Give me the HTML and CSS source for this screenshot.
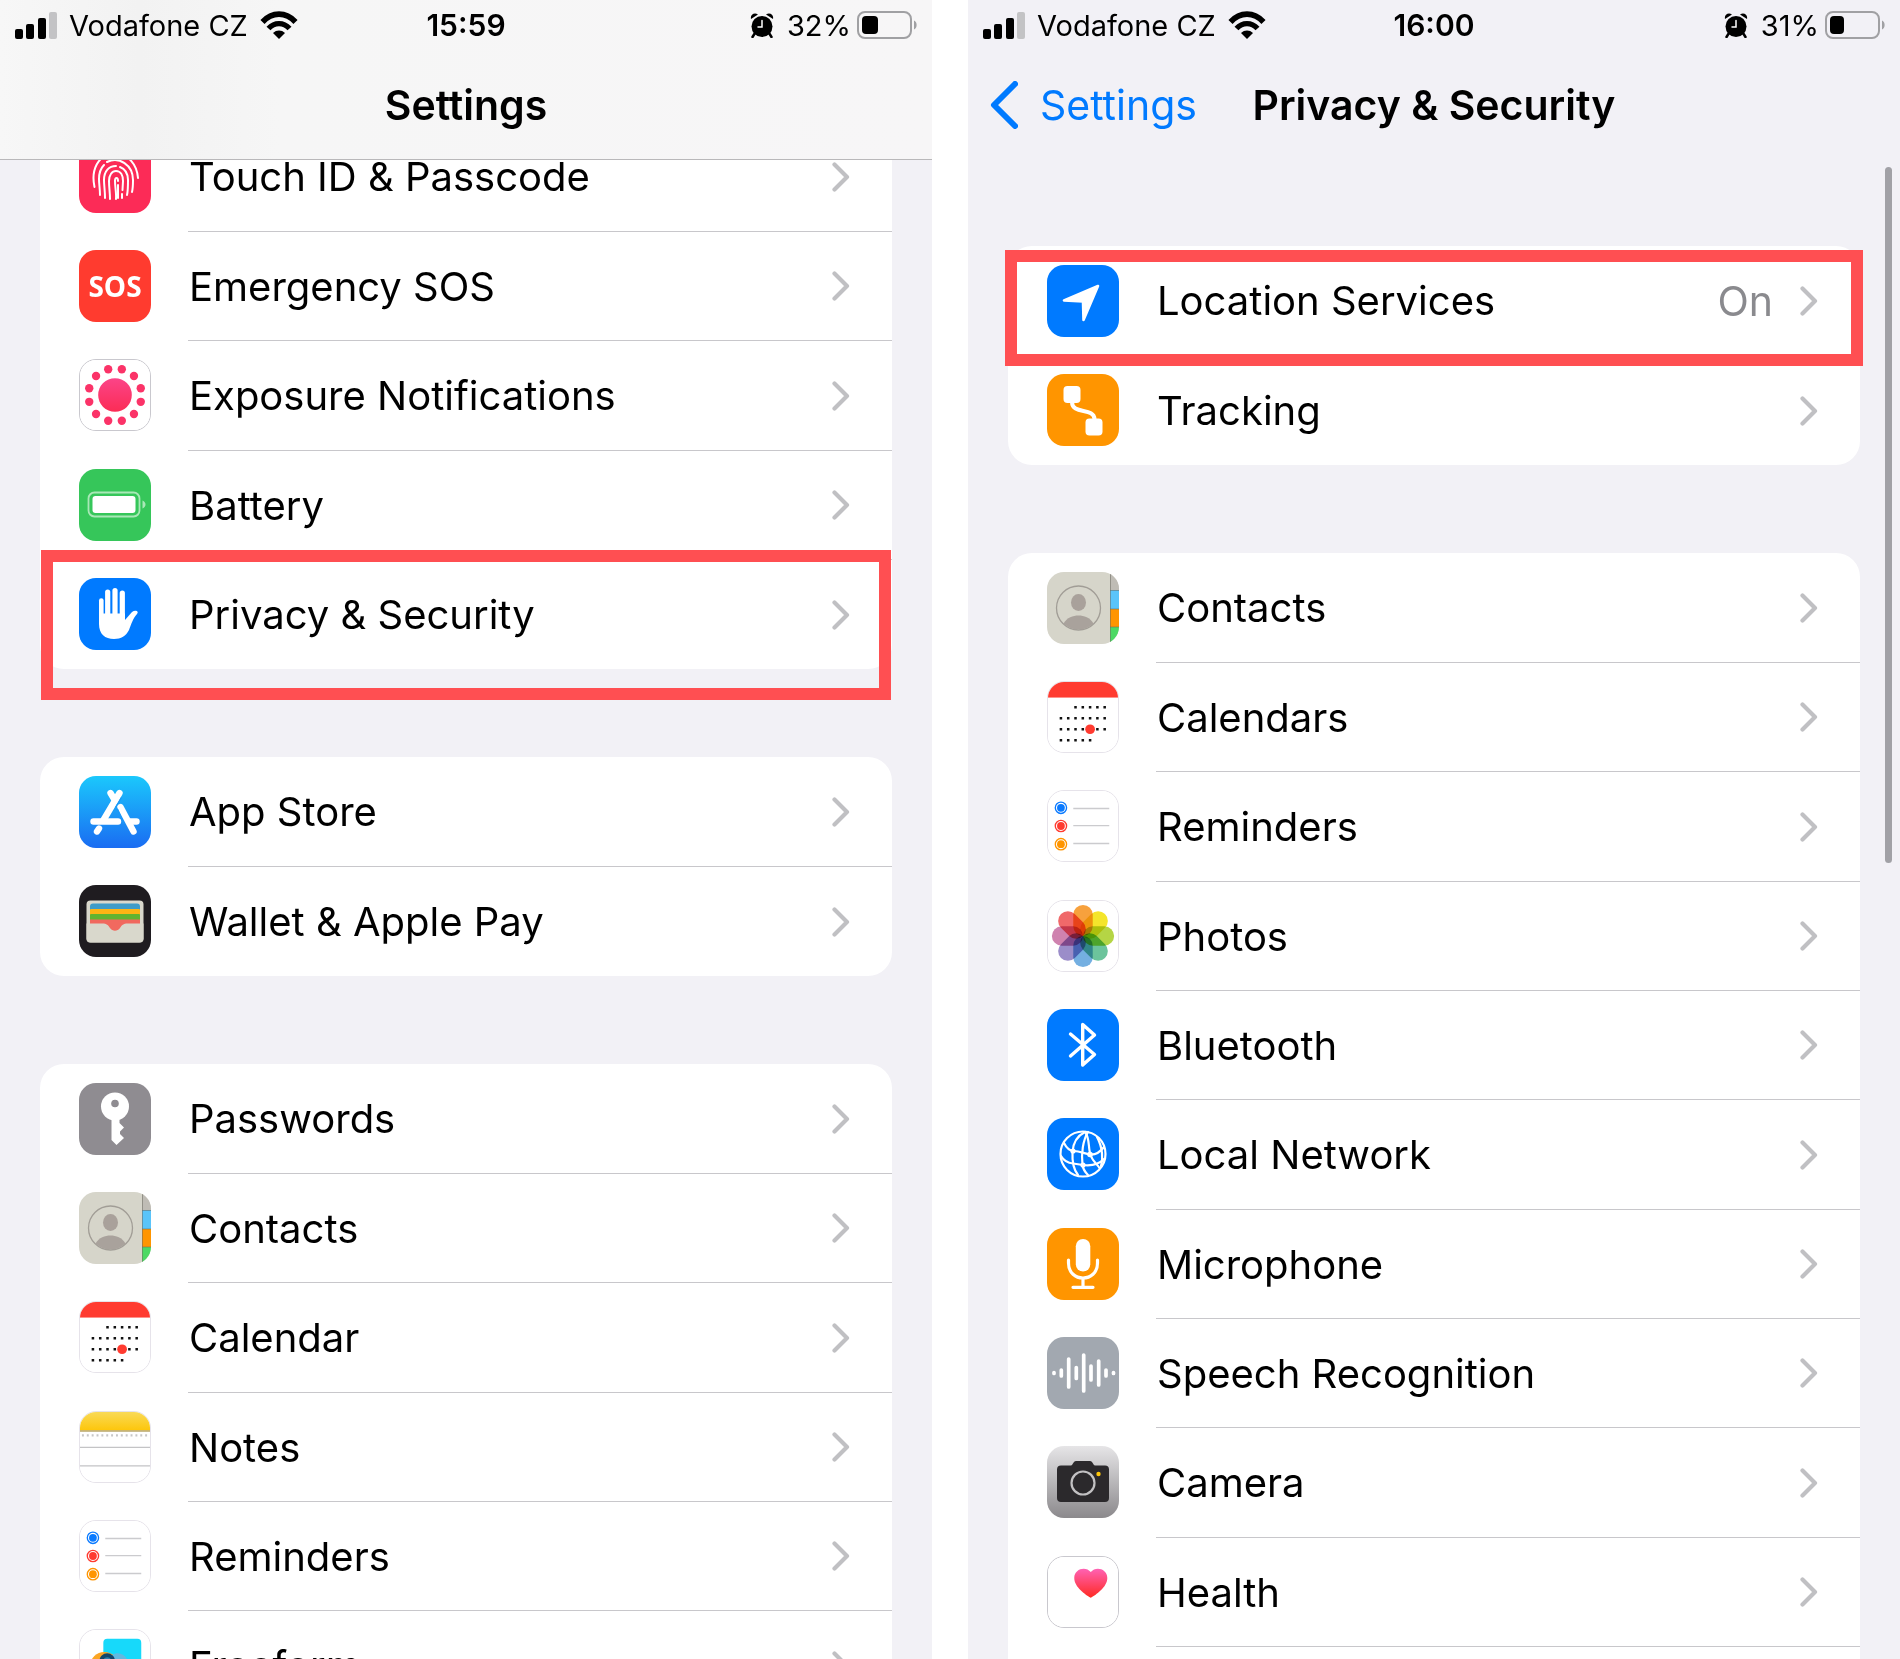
FILE: index.html
```html
<!DOCTYPE html>
<html lang="en">
  <head>
    <meta charset="utf-8">
    <title>Settings</title>
    <link rel="stylesheet" href="styles.css">
  </head>
  <body>
    <!-- shared icons -->
    <svg class="sprite" aria-hidden="true">
      <defs>
        <linearGradient id="pink" x1="0" y1="0" x2="0" y2="1">
          <stop offset="0" stop-color="#fb4488"/>
          <stop offset="1" stop-color="#fb2c55"/>
        </linearGradient>
        <linearGradient id="sky" x1="0" y1="0" x2="0" y2="1">
          <stop offset="0" stop-color="#1bc8fc"/>
          <stop offset="1" stop-color="#1a6cf2"/>
        </linearGradient>
        <linearGradient id="gold" x1="0" y1="0" x2="0" y2="1">
          <stop offset="0" stop-color="#f9da57"/>
          <stop offset="1" stop-color="#fdc60a"/>
        </linearGradient>
        <linearGradient id="metal" x1="0" y1="0" x2="0" y2="1">
          <stop offset="0" stop-color="#e6e5e7"/>
          <stop offset="1" stop-color="#8b898c"/>
        </linearGradient>
        <linearGradient id="heart" x1="0" y1="0" x2="0" y2="1">
          <stop offset="0" stop-color="#ff62b4"/>
          <stop offset="1" stop-color="#ff2a22"/>
        </linearGradient>
      </defs>

      <symbol id="chevron" viewBox="0 0 18 30">
        <path d="M2.5 2.5 L15 15 L2.5 27.5" fill="none" stroke="#c0c0c3" stroke-width="4.200" stroke-linecap="round" stroke-linejoin="round"/>
      </symbol>

      <symbol id="signal" viewBox="0 0 42 27">
        <rect x="0" y="17" width="8" height="10" rx="2"/>
        <rect x="11" y="12" width="8" height="15" rx="2"/>
        <rect x="23" y="6" width="8" height="21" rx="2"/>
        <rect x="34" y="0" width="8" height="27" rx="2" fill="#c3c3c5"/>
      </symbol>

      <symbol id="wifi" viewBox="0 0 38 28">
        <path d="M2.500 11 C12 0.500 26 0.500 35.500 11" fill="none" stroke="#000" stroke-width="5.600"/>
        <path d="M8.500 17.500 C14.500 11 23.500 11 29.500 17.500" fill="none" stroke="#000" stroke-width="5.400"/>
        <path d="M13 22 C16.500 18.700 21.500 18.700 25 22 L19 28 Z"/>
      </symbol>

      <symbol id="alarm" viewBox="0 0 24 25">
        <circle cx="12" cy="13.500" r="10.500"/>
        <path d="M1 6 C0 2 4 -1 8 1.500 Z M23 6 C24 2 20 -1 16 1.500 Z"/>
        <path d="M5 20 L2.500 24 M19 20 L21.500 24" stroke="#000" stroke-width="2.500" stroke-linecap="round"/>
        <path d="M12 7.500 V14 H8" fill="none" stroke="#fff" stroke-width="1.500" stroke-linecap="round"/>
      </symbol>

      <symbol id="contacts" viewBox="0 0 72 72">
        <rect width="72" height="72" fill="#d6d5ca"/>
        <rect x="63" y="0" width="9" height="18" fill="#bfbcb5"/>
        <rect x="63" y="18" width="9" height="19" fill="#5ac4fa"/>
        <rect x="63" y="37" width="9" height="18" fill="#ff9500"/>
        <rect x="63" y="55" width="9" height="17" fill="#4cd964"/>
        <path d="M63 18.500 H72 M63 37 H72 M63 55 H72 M63.500 0 V72" stroke="#6d6b60" stroke-opacity=".55"/>
        <circle cx="31.500" cy="36" r="22" fill="none" stroke="#a19d96" stroke-width="1.300"/>
        <ellipse cx="31.500" cy="30.500" rx="7.500" ry="8.500" fill="#a9a19b"/>
        <path d="M16.500 51.500 C20 45.500 26 43.500 31.500 43.500 S43 45.500 46.500 51.500 A21.500 21.500 0 0 1 16.500 51.500Z" fill="#a9a29c"/>
      </symbol>

      <symbol id="calendar" viewBox="0 0 72 72">
        <rect width="72" height="72" fill="#fff"/>
        <rect width="72" height="16" fill="#ff3b30"/>
        <g stroke="#111" stroke-width="2.600" stroke-dasharray="2.600 4.900">
          <path d="M27 26 H60"/>
          <path d="M12 37.300 H60"/>
          <path d="M12 48.600 H60"/>
          <path d="M12 60 H45"/>
        </g>
        <circle cx="43.300" cy="48.600" r="5" fill="#ff3b30"/>
      </symbol>

      <symbol id="reminders" viewBox="0 0 72 72">
        <rect width="72" height="72" fill="#fff"/>
        <g fill="none" stroke-width="1.400">
          <circle cx="13.300" cy="17.300" r="5.800" stroke="#0a7aff"/>
          <circle cx="13.300" cy="36" r="5.800" stroke="#ff3b30"/>
          <circle cx="13.300" cy="54.700" r="5.800" stroke="#ff9500"/>
        </g>
        <circle cx="13.300" cy="17.300" r="4" fill="#0a7aff"/>
        <circle cx="13.300" cy="36" r="4" fill="#ff3b30"/>
        <circle cx="13.300" cy="54.700" r="4" fill="#ff9500"/>
        <path d="M26 18 H63 M26 35.500 H63 M26 54 H63" stroke="#cbcbce" stroke-width="1.300"/>
      </symbol>
    </svg>

    <main class="screens">

      <section class="screen">
        <header class="top-bar scrolled">
          <div class="status">
            <div class="status-left">
              <svg class="signal"><use href="#signal"/></svg>
              <span>Vodafone CZ</span>
              <svg class="wifi"><use href="#wifi"/></svg>
            </div>
            <span class="time">15:59</span>
            <div class="status-right">
              <svg class="alarm"><use href="#alarm"/></svg>
              <span>32%</span>
              <svg class="battery" viewBox="0 0 60 28">
                <rect x="1" y="1" width="53" height="26" rx="7" fill="none" stroke="#a0a0a3" stroke-width="2"/>
                <rect x="5" y="5" width="16" height="18" rx="4"/>
                <path d="M57 9.500 C60.500 11 60.500 17 57 18.500Z" fill="#a0a0a3"/>
              </svg>
            </div>
          </div>
          <nav class="nav">
            <h1 class="title">Settings</h1>
          </nav>
        </header>

        <div class="content content-scrolled">
          <ul class="card">
            <li class="row">
              <a href="#touch-id">
                <svg class="icon" viewBox="0 0 72 72">
                  <rect width="72" height="72" fill="#fc2b57"/>
                  <g fill="none" stroke="#fff" stroke-width="2" stroke-linecap="round">
                    <path d="M15.500 46 C12 30 18 13 36 13 C50 13 58 24 59 37"/>
                    <path d="M21 54 C21 48 20 43 20 38 C20 32 22 27 25 24 M28 21 C40 15 54 24 54 39 C54 44 54 47 53 51"/>
                    <path d="M26 57 C26 50 25 44 25 39 C25 30 30 25 37 25 M41 26 C46 28 49 32 49 39 C49 45 49 50 48 54"/>
                    <path d="M31 58 C31 52 30 46 30 40 C30 34 33 30 37 30 C42 30 44 35 44 40 L43.500 49 M43 53 V57"/>
                    <path d="M37 58 C37.500 52 36 46 36 40 C36 36 39 36 39 40"/>
                    <path d="M39 44 V57"/>
                  </g>
                </svg>
                <span class="row-body">
                  <span class="label">Touch ID &amp; Passcode</span>
                  <svg class="chevron"><use href="#chevron"/></svg>
                </span>
              </a>
            </li>
            <li class="row">
              <a href="#sos">
                <span class="icon icon-sos">SOS</span>
                <span class="row-body">
                  <span class="label">Emergency SOS</span>
                  <svg class="chevron"><use href="#chevron"/></svg>
                </span>
              </a>
            </li>
            <li class="row">
              <a href="#exposure">
                <svg class="icon icon-outline" viewBox="0 0 72 72">
                  <rect width="72" height="72" fill="#fff"/>
                  <circle cx="36" cy="36" r="17.300" fill="url(#pink)"/>
                  <g fill="#fb3368">
                    <circle cx="29" cy="9.500" r="4.300"/>
                    <circle cx="43" cy="9.500" r="4.300"/>
                    <circle cx="55.500" cy="16.500" r="4.300"/>
                    <circle cx="62.500" cy="29" r="4.300"/>
                    <circle cx="62.500" cy="43" r="4.300"/>
                    <circle cx="55.500" cy="55.500" r="4.300"/>
                    <circle cx="43" cy="62.500" r="4.300"/>
                    <circle cx="29" cy="62.500" r="4.300"/>
                    <circle cx="16.500" cy="55.500" r="4.300"/>
                    <circle cx="9.500" cy="43" r="4.300"/>
                    <circle cx="9.500" cy="29" r="4.300"/>
                    <circle cx="16.500" cy="16.500" r="4.300"/>
                  </g>
                </svg>
                <span class="row-body">
                  <span class="label">Exposure Notifications</span>
                  <svg class="chevron"><use href="#chevron"/></svg>
                </span>
              </a>
            </li>
            <li class="row">
              <a href="#battery">
                <svg class="icon" viewBox="0 0 72 72">
                  <rect width="72" height="72" fill="#36c65a"/>
                  <rect x="9.500" y="23.500" width="51" height="24" rx="6" fill="none" stroke="#a9e8b7" stroke-width="1.800"/>
                  <rect x="13.500" y="27" width="43" height="17" rx="3" fill="#fff"/>
                  <path d="M63.500 31.500 C67.500 33 67.500 38 63.500 39.500Z" fill="#a9e8b7"/>
                </svg>
                <span class="row-body">
                  <span class="label">Battery</span>
                  <svg class="chevron"><use href="#chevron"/></svg>
                </span>
              </a>
            </li>
            <li class="row highlight highlight-privacy">
              <a href="#privacy">
                <svg class="icon" viewBox="0 0 72 72">
                  <rect width="72" height="72" fill="#007aff"/>
                  <g stroke="#fff" stroke-width="5.200" stroke-linecap="round">
                    <path d="M22.300 22.500 V44" stroke-width="4.600"/>
                    <path d="M28.700 14 V44"/>
                    <path d="M36 12.600 V44"/>
                    <path d="M43.300 15 V44"/>
                  </g>
                  <path d="M20 35.500 V46 C20 56 26 61 35 61 C42 61 47 58 50 52 C52 47 54 40 58 36 C60.500 33 56 31.500 53 34 L46 42 V35.500 Z" fill="#fff"/>
                </svg>
                <span class="row-body">
                  <span class="label">Privacy &amp; Security</span>
                  <svg class="chevron"><use href="#chevron"/></svg>
                </span>
              </a>
            </li>
          </ul>

          <ul class="card">
            <li class="row">
              <a href="#app-store">
                <svg class="icon" viewBox="0 0 72 72">
                  <rect width="72" height="72" fill="url(#sky)"/>
                  <g fill="none" stroke="#fff" stroke-width="6.400" stroke-linecap="round">
                    <path d="M31.500 17 L36 24.500"/>
                    <path d="M40.500 17 L24.500 44"/>
                    <path d="M41.500 31 L54.500 55.500"/>
                    <path d="M14.500 45.500 H39"/>
                    <path d="M50 45.500 H57.500"/>
                    <path d="M20 52.500 L18 55.500"/>
                  </g>
                  <path d="M42.500 21.500 L36.500 31.500 M38.500 33 L45 48" stroke="#1a97f8" stroke-width="1.200"/>
                </svg>
                <span class="row-body">
                  <span class="label">App Store</span>
                  <svg class="chevron"><use href="#chevron"/></svg>
                </span>
              </a>
            </li>
            <li class="row">
              <a href="#wallet">
                <svg class="icon" viewBox="0 0 72 72">
                  <rect width="72" height="72" fill="#1f1c20"/>
                  <rect x="7.500" y="15.500" width="57" height="42" rx="4" fill="#d9d8cc"/>
                  <rect x="11" y="18.500" width="50" height="12" rx="3" fill="#3f9cc8"/>
                  <rect x="11" y="24" width="50" height="8" rx="1" fill="#fdb414"/>
                  <rect x="11" y="29" width="50" height="8" rx="1" fill="#62b330"/>
                  <rect x="11" y="34.500" width="50" height="14" fill="#f1695f"/>
                  <path d="M7.500 38.500 H23 C28 38.500 29 40 31 43 C33.500 46.500 38.500 46.500 41 43 C43 40 44 38.500 49 38.500 H64.500 V53.500 A4 4 0 0 1 60.500 57.500 H11.500 A4 4 0 0 1 7.500 53.500 Z" fill="#d9d8cc"/>
                </svg>
                <span class="row-body">
                  <span class="label">Wallet &amp; Apple Pay</span>
                  <svg class="chevron"><use href="#chevron"/></svg>
                </span>
              </a>
            </li>
          </ul>

          <ul class="card">
            <li class="row">
              <a href="#passwords">
                <svg class="icon" viewBox="0 0 72 72">
                  <rect width="72" height="72" fill="#8f8c91"/>
                  <circle cx="36" cy="23.500" r="14" fill="#fff"/>
                  <path d="M32.500 34 V57 L37.500 62 L45 55 L41 51 V48.500 L45 44.500 L40.500 40 V34 Z" fill="#fff"/>
                  <circle cx="36" cy="20.500" r="3.800" fill="#8f8c91"/>
                </svg>
                <span class="row-body">
                  <span class="label">Passwords</span>
                  <svg class="chevron"><use href="#chevron"/></svg>
                </span>
              </a>
            </li>
            <li class="row">
              <a href="#contacts-app">
                <svg class="icon"><use href="#contacts"/></svg>
                <span class="row-body">
                  <span class="label">Contacts</span>
                  <svg class="chevron"><use href="#chevron"/></svg>
                </span>
              </a>
            </li>
            <li class="row">
              <a href="#calendar-app">
                <svg class="icon icon-soft"><use href="#calendar"/></svg>
                <span class="row-body">
                  <span class="label">Calendar</span>
                  <svg class="chevron"><use href="#chevron"/></svg>
                </span>
              </a>
            </li>
            <li class="row">
              <a href="#notes">
                <svg class="icon icon-soft" viewBox="0 0 72 72">
                  <rect width="72" height="72" fill="#fff"/>
                  <rect width="72" height="19" fill="url(#gold)"/>
                  <path d="M0 19.500 H72" stroke="#b9a667" stroke-width="1.500"/>
                  <path d="M2 24 H72" stroke="#c6c6c8" stroke-width="2.200" stroke-dasharray="2 3"/>
                  <path d="M0 36.500 H72 M0 55.300 H72" stroke="#c4c4c6" stroke-width="1.300"/>
                </svg>
                <span class="row-body">
                  <span class="label">Notes</span>
                  <svg class="chevron"><use href="#chevron"/></svg>
                </span>
              </a>
            </li>
            <li class="row">
              <a href="#reminders-app">
                <svg class="icon icon-soft"><use href="#reminders"/></svg>
                <span class="row-body">
                  <span class="label">Reminders</span>
                  <svg class="chevron"><use href="#chevron"/></svg>
                </span>
              </a>
            </li>
            <li class="row">
              <a href="#freeform">
                <svg class="icon icon-soft" viewBox="0 0 72 72">
                  <rect width="72" height="72" fill="#fff"/>
                  <rect x="24" y="9" width="39" height="40" rx="4" fill="#17d9fa"/>
                  <circle cx="25" cy="37" r="14.500" fill="#fba524"/>
                  <path d="M33 26 C40 21 48 26 50 34 L34 36 Z" fill="#62b9e0"/>
                  <circle cx="28" cy="32" r="6" fill="#2f7fae" stroke="#12466b" stroke-width="4"/>
                </svg>
                <span class="row-body">
                  <span class="label">Freeform</span>
                  <svg class="chevron"><use href="#chevron"/></svg>
                </span>
              </a>
            </li>
          </ul>
        </div>
      </section>

      <section class="screen">
        <header class="top-bar">
          <div class="status">
            <div class="status-left">
              <svg class="signal"><use href="#signal"/></svg>
              <span>Vodafone CZ</span>
              <svg class="wifi"><use href="#wifi"/></svg>
            </div>
            <span class="time">16:00</span>
            <div class="status-right">
              <svg class="alarm"><use href="#alarm"/></svg>
              <span>31%</span>
              <svg class="battery" viewBox="0 0 60 28">
                <rect x="1" y="1" width="53" height="26" rx="7" fill="none" stroke="#a0a0a3" stroke-width="2"/>
                <rect x="5" y="5" width="14" height="18" rx="4"/>
                <path d="M57 9.500 C60.500 11 60.500 17 57 18.500Z" fill="#a0a0a3"/>
              </svg>
            </div>
          </div>
          <nav class="nav">
            <a href="#settings" class="back">
              <svg class="back-arrow" viewBox="0 0 28 48">
                <path d="M25 3 L4 24 L25 45" fill="none" stroke="#007aff" stroke-width="6" stroke-linecap="round" stroke-linejoin="round"/>
              </svg>
              Settings
            </a>
            <h1 class="title">Privacy &amp; Security</h1>
          </nav>
        </header>

        <div class="content">
          <ul class="card">
            <li class="row highlight highlight-location">
              <a href="#location">
                <svg class="icon" viewBox="0 0 72 72">
                  <rect width="72" height="72" fill="#007aff"/>
                  <path d="M51 21 L17 35.500 L36 36.500 L36.500 55 Z" fill="#fff" stroke="#fff" stroke-width="2.600" stroke-linejoin="round"/>
                </svg>
                <span class="row-body">
                  <span class="label">Location Services</span>
                  <span class="value">On</span>
                  <svg class="chevron"><use href="#chevron"/></svg>
                </span>
              </a>
            </li>
            <li class="row">
              <a href="#tracking">
                <svg class="icon" viewBox="0 0 72 72">
                  <rect width="72" height="72" fill="#ff9500"/>
                  <rect x="16.500" y="12" width="17" height="17" rx="4" fill="#fff"/>
                  <rect x="38.500" y="44.500" width="17" height="17" rx="4" fill="#fff"/>
                  <path d="M25 28 C25 41 47 33 47.500 45" fill="none" stroke="#fff" stroke-width="4"/>
                </svg>
                <span class="row-body">
                  <span class="label">Tracking</span>
                  <svg class="chevron"><use href="#chevron"/></svg>
                </span>
              </a>
            </li>
          </ul>

          <ul class="card">
            <li class="row">
              <a href="#contacts-access">
                <svg class="icon"><use href="#contacts"/></svg>
                <span class="row-body">
                  <span class="label">Contacts</span>
                  <svg class="chevron"><use href="#chevron"/></svg>
                </span>
              </a>
            </li>
            <li class="row">
              <a href="#calendars-access">
                <svg class="icon icon-soft"><use href="#calendar"/></svg>
                <span class="row-body">
                  <span class="label">Calendars</span>
                  <svg class="chevron"><use href="#chevron"/></svg>
                </span>
              </a>
            </li>
            <li class="row">
              <a href="#reminders-access">
                <svg class="icon icon-soft"><use href="#reminders"/></svg>
                <span class="row-body">
                  <span class="label">Reminders</span>
                  <svg class="chevron"><use href="#chevron"/></svg>
                </span>
              </a>
            </li>
            <li class="row">
              <a href="#photos">
                <svg class="icon icon-soft" viewBox="0 0 72 72">
                  <rect width="72" height="72" fill="#fff"/>
                  <g class="petals">
                    <rect x="26" y="4" width="20" height="32" rx="10" fill="#f7a13d"/>
                    <rect x="26" y="4" width="20" height="32" rx="10" fill="#f4e52b" transform="rotate(45 36 36)"/>
                    <rect x="26" y="4" width="20" height="32" rx="10" fill="#b5d545" transform="rotate(90 36 36)"/>
                    <rect x="26" y="4" width="20" height="32" rx="10" fill="#6cc49c" transform="rotate(135 36 36)"/>
                    <rect x="26" y="4" width="20" height="32" rx="10" fill="#74afe1" transform="rotate(180 36 36)"/>
                    <rect x="26" y="4" width="20" height="32" rx="10" fill="#9b8dc9" transform="rotate(225 36 36)"/>
                    <rect x="26" y="4" width="20" height="32" rx="10" fill="#cf82af" transform="rotate(270 36 36)"/>
                    <rect x="26" y="4" width="20" height="32" rx="10" fill="#f0696a" transform="rotate(315 36 36)"/>
                  </g>
                </svg>
                <span class="row-body">
                  <span class="label">Photos</span>
                  <svg class="chevron"><use href="#chevron"/></svg>
                </span>
              </a>
            </li>
            <li class="row">
              <a href="#bluetooth">
                <svg class="icon" viewBox="0 0 72 72">
                  <rect width="72" height="72" fill="#007aff"/>
                  <path d="M23.500 25 L47.500 45.500 L35.700 56 V15.500 L47.500 26 L23.500 47" fill="none" stroke="#fff" stroke-width="3.400" stroke-linecap="round" stroke-linejoin="round"/>
                </svg>
                <span class="row-body">
                  <span class="label">Bluetooth</span>
                  <svg class="chevron"><use href="#chevron"/></svg>
                </span>
              </a>
            </li>
            <li class="row">
              <a href="#local-network">
                <svg class="icon" viewBox="0 0 72 72">
                  <rect width="72" height="72" fill="#007aff"/>
                  <g fill="none" stroke="#fff" stroke-width="2.200" stroke-linecap="round">
                    <circle cx="36" cy="36" r="22.500"/>
                    <path d="M38 14 C30 18 26 26 25.500 34 C25 44 27 52 31 57"/>
                    <path d="M41 14 C36 22 34 36 35.500 47 C36 51 38 54 41 57"/>
                    <path d="M38 14 C43 20 41 30 43.500 37 C45.500 43 50 46 52.500 50"/>
                    <path d="M54 48 C56 42 56 30 50 19"/>
                    <path d="M17 25 C20 31 23 33 27 33 C33 33 38 36 43 36.500 C49 37 54 33 57 29"/>
                    <path d="M14 38 C17 43 21 45 26 45.500 L36 47 C44 48 52 46 57 41"/>
                  </g>
                  <g fill="#fff">
                    <circle cx="26" cy="33" r="2.600"/>
                    <circle cx="43" cy="36.500" r="2.800"/>
                    <circle cx="36" cy="47" r="2.600"/>
                  </g>
                </svg>
                <span class="row-body">
                  <span class="label">Local Network</span>
                  <svg class="chevron"><use href="#chevron"/></svg>
                </span>
              </a>
            </li>
            <li class="row">
              <a href="#microphone">
                <svg class="icon" viewBox="0 0 72 72">
                  <rect width="72" height="72" fill="#ff9500"/>
                  <rect x="28.800" y="11" width="14.500" height="32.500" rx="7.200" fill="#fff"/>
                  <path d="M21.500 32 V35 C21.500 55 50.500 55 50.500 35 V32 M36 50 V59 M26 59.300 H46" fill="none" stroke="#fff" stroke-width="3.200" stroke-linecap="round"/>
                </svg>
                <span class="row-body">
                  <span class="label">Microphone</span>
                  <svg class="chevron"><use href="#chevron"/></svg>
                </span>
              </a>
            </li>
            <li class="row">
              <a href="#speech">
                <svg class="icon" viewBox="0 0 72 72">
                  <rect width="72" height="72" fill="#a2a8b0"/>
                  <path d="M7 35.500 V36.500 M14.300 33 V39 M21.700 22 V50 M29.300 30.500 V41.500 M36.700 18 V54 M44 29 V43 M51.700 24 V48 M59 33 V39 M66.500 35.500 V36.500" stroke="#fff" stroke-width="3.700" stroke-linecap="round"/>
                </svg>
                <span class="row-body">
                  <span class="label">Speech Recognition</span>
                  <svg class="chevron"><use href="#chevron"/></svg>
                </span>
              </a>
            </li>
            <li class="row">
              <a href="#camera">
                <svg class="icon" viewBox="0 0 72 72">
                  <rect width="72" height="72" fill="url(#metal)"/>
                  <path d="M14 19.500 H24 C26 19.500 26 15 29 15 H43 C46 15 46 19.500 48 19.500 H58 A4 4 0 0 1 62 23.500 V52 A4 4 0 0 1 58 56 H14 A4 4 0 0 1 10 52 V23.500 A4 4 0 0 1 14 19.500 Z" fill="#2b292c"/>
                  <circle cx="36" cy="37" r="11.500" fill="none" stroke="#c2c1c3" stroke-width="2.200"/>
                  <circle cx="51.500" cy="28" r="2.200" fill="#fdc60a"/>
                </svg>
                <span class="row-body">
                  <span class="label">Camera</span>
                  <svg class="chevron"><use href="#chevron"/></svg>
                </span>
              </a>
            </li>
            <li class="row">
              <a href="#health">
                <svg class="icon icon-outline" viewBox="0 0 72 72">
                  <rect width="72" height="72" fill="#fff"/>
                  <path d="M44 42 C39 39 27 31 27 21.500 C27 12 39 9 44 15.500 C49 9 61 12 61 21.500 C61 31 49 39 44 42 Z" fill="url(#heart)"/>
                </svg>
                <span class="row-body">
                  <span class="label">Health</span>
                  <svg class="chevron"><use href="#chevron"/></svg>
                </span>
              </a>
            </li>
            <li class="row">
              <a href="#more">
                <span class="row-body row-empty"></span>
              </a>
            </li>
          </ul>
        </div>
        <div class="scroll-thumb"></div>
      </section>

    </main>
  </body>
</html>
```

FILE: styles.css
```css
* {
  box-sizing: border-box;
}

body {
  margin: 0;
  background-color: white;
  font-family: Inter, Roboto, "Liberation Sans", sans-serif;
  color: black;
}

.sprite {
  position: absolute;
  width: 0;
  height: 0;
}

.screens {
  display: grid;
  grid-template-columns: 1fr 1fr;
  gap: 36px;
  height: 100vh;
  overflow: hidden;
}

.screen {
  position: relative;
  display: flex;
  flex-direction: column;
  min-height: 0;
  overflow: hidden;
  background-color: #f2f1f6;
}

/* status bar and title */

.top-bar {
  flex: none;
  height: 160px;
  border-bottom: 1px solid transparent;
}

.scrolled {
  background: linear-gradient(to right, #f7f7f7, #f2f2f2 15%, #f6f6f6 30%, #f7f6f7);
  border-bottom-color: #b9b8ba;
}

.status {
  display: grid;
  grid-template-columns: 1fr auto 1fr;
  align-items: center;
  height: 50px;
  padding: 0 15px;
  font-size: 29px;
}

.status-left,
.status-right {
  display: flex;
  align-items: center;
  gap: 12px;
}

.status-right {
  justify-content: flex-end;
  gap: 6px;
}

.time {
  font-size: 30px;
  font-weight: 600;
}

.signal {
  width: 42px;
  height: 27px;
}

.wifi {
  width: 38px;
  height: 28px;
}

.alarm {
  width: 24px;
  height: 25px;
  margin-right: 7px;
}

.battery {
  width: 60px;
  height: 28px;
}

.nav {
  display: grid;
  grid-template-columns: 1fr auto 1fr;
  align-items: center;
  height: 109px;
  padding: 0 22px;
}

.title {
  grid-column: 2;
  margin: 0;
  font-size: 41px;
  font-weight: 600;
}

.back {
  display: flex;
  align-items: center;
  gap: 22px;
  font-size: 41px;
  color: #007aff;
  text-decoration: none;
}

.back-arrow {
  width: 28px;
  height: 48px;
}

/* lists */

.content {
  flex: 1;
  min-height: 0;
  overflow: hidden;
  padding: 86px 40px 0;
}

.content-scrolled {
  padding-top: 0;
}

.content-scrolled .card:first-child {
  margin-top: -38px;
}

.card {
  margin: 0 0 88px;
  padding: 0;
  list-style: none;
  background-color: white;
  border-radius: 24px;
}

.row {
  height: 109px;
}

.row:nth-child(3n),
.row:last-child {
  height: 110px;
}

.row a {
  display: flex;
  align-items: center;
  gap: 37px;
  height: 100%;
  padding-left: 39px;
  color: black;
  text-decoration: none;
}

.icon {
  flex: none;
  width: 72px;
  height: 72px;
  border-radius: 17px;
  overflow: hidden;
}

.icon-outline {
  border: 1px solid #c9c8ce;
}

.icon-soft {
  border: 1px solid #e6e3ea;
}

.icon-sos {
  display: flex;
  align-items: center;
  justify-content: center;
  background-color: #ff3b2f;
  color: white;
  font-family: "Liberation Sans Narrow", "Open Sans", sans-serif;
  font-size: 28px;
  font-weight: bold;
}

.petals rect {
  mix-blend-mode: multiply;
}

.row-body {
  flex: 1;
  display: flex;
  align-items: center;
  height: 100%;
  padding: 0 42px 0 1px;
}

.row + .row .row-body {
  border-top: 1px solid #c8c7cb;
}

.row-empty {
  margin-left: 109px;
}

.label {
  flex: 1;
  font-size: 40px;
}

.value {
  margin-right: 27px;
  font-size: 41px;
  color: #8a8a8e;
}

.chevron {
  width: 18px;
  height: 30px;
}

/* red frames around the rows to tap */

.highlight {
  position: relative;
}

.highlight::after {
  content: "";
  position: absolute;
  border: 12px solid #ff4f52;
  pointer-events: none;
}

.highlight-privacy::after {
  inset: -9px 1px -31px;
}

.highlight-location::after {
  inset: 4px -3px -11px;
}

.scroll-thumb {
  position: absolute;
  top: 167px;
  right: 8px;
  width: 7px;
  height: 696px;
  border-radius: 4px;
  background-color: #a1a1a6;
}
```
